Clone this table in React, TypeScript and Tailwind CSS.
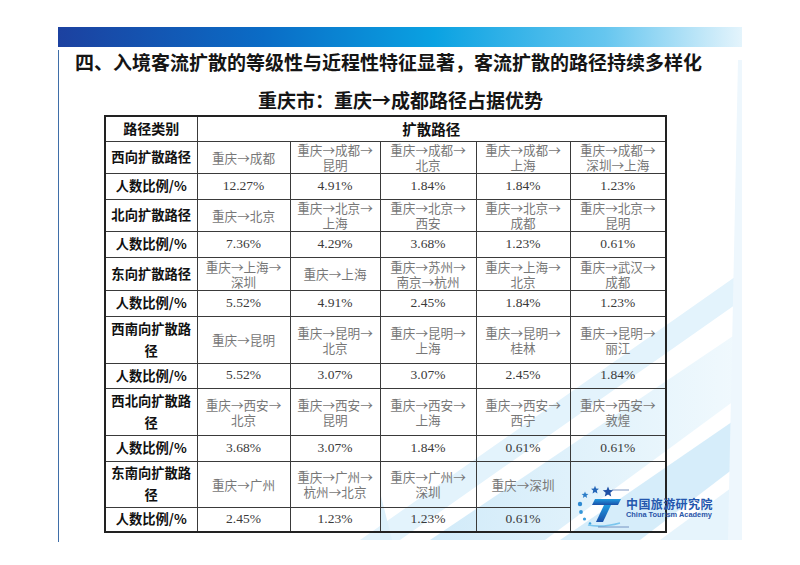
import React from "react";

type Group = {
  label: string;
  routes: string[];
  pcts: string[];
  rowH: string;
  pctH: string;
  tall?: boolean;
};

const groups: Group[] = [
  {
    label: "西向扩散路径",
    routes: ["重庆→成都", "重庆→成都→\n昆明", "重庆→成都→\n北京", "重庆→成都→\n上海", "重庆→成都→\n深圳→上海"],
    pcts: ["12.27%", "4.91%", "1.84%", "1.84%", "1.23%"],
    rowH: "h-[32px]",
    pctH: "h-[26px]",
  },
  {
    label: "北向扩散路径",
    routes: ["重庆→北京", "重庆→北京→\n上海", "重庆→北京→\n西安", "重庆→北京→\n成都", "重庆→北京→\n昆明"],
    pcts: ["7.36%", "4.29%", "3.68%", "1.23%", "0.61%"],
    rowH: "h-[32px]",
    pctH: "h-[26px]",
  },
  {
    label: "东向扩散路径",
    routes: ["重庆→上海→\n深圳", "重庆→上海", "重庆→苏州→\n南京→杭州", "重庆→上海→\n北京", "重庆→武汉→\n成都"],
    pcts: ["5.52%", "4.91%", "2.45%", "1.84%", "1.23%"],
    rowH: "h-[33px]",
    pctH: "h-[26px]",
  },
  {
    label: "西南向扩散路\n径",
    routes: ["重庆→昆明", "重庆→昆明→\n北京", "重庆→昆明→\n上海", "重庆→昆明→\n桂林", "重庆→昆明→\n丽江"],
    pcts: ["5.52%", "3.07%", "3.07%", "2.45%", "1.84%"],
    rowH: "h-[47px]",
    pctH: "h-[25px]",
    tall: true,
  },
  {
    label: "西北向扩散路\n径",
    routes: ["重庆→西安→\n北京", "重庆→西安→\n昆明", "重庆→西安→\n上海", "重庆→西安→\n西宁", "重庆→西安→\n敦煌"],
    pcts: ["3.68%", "3.07%", "1.84%", "0.61%", "0.61%"],
    rowH: "h-[47px]",
    pctH: "h-[26px]",
    tall: true,
  },
  {
    label: "东南向扩散路\n径",
    routes: ["重庆→广州", "重庆→广州→\n杭州→北京", "重庆→广州→\n深圳", "重庆→深圳"],
    pcts: ["2.45%", "1.23%", "1.23%", "0.61%"],
    rowH: "h-[46px]",
    pctH: "h-[25px]",
    tall: true,
  },
];

const cjk = "font-['Noto_Sans_CJK_SC',sans-serif]";
const cell = "border border-[#3a3a3a] p-0 text-center align-middle";

// the arrows in the source are full-width, Noto's are narrow
const Route = ({ text }: { text: string }) => (
  <>
    {text.split("\n").map((line, i) => (
      <div key={i}>
        {line.split("→").map((part, j) => (
          <React.Fragment key={j}>
            {j > 0 && <span className="inline-block w-[1em] text-center">→</span>}
            {part}
          </React.Fragment>
        ))}
      </div>
    ))}
  </>
);

const Lines = ({ text }: { text: string }) => (
  <>
    {text.split("\n").map((t, i) => (
      <div key={i}>{t}</div>
    ))}
  </>
);

const star = (cx: number, cy: number, r: number) => {
  const pts: string[] = [];
  for (let i = 0; i < 10; i++) {
    const rad = i % 2 === 0 ? r : r * 0.45;
    const a = -Math.PI / 2 + (i * Math.PI) / 5;
    pts.push(`${(cx + rad * Math.cos(a)).toFixed(2)},${(cy + rad * Math.sin(a)).toFixed(2)}`);
  }
  return pts.join(" ");
};

const Logo = () => (
  <div className="absolute left-[576px] top-[484px] flex items-start">
    <svg width="50" height="46" viewBox="0 0 50 46" className="overflow-visible">
      <defs>
        <linearGradient id="tgrad" x1="0" y1="0" x2="0" y2="1">
          <stop offset="0%" stopColor="#1f9ae0" />
          <stop offset="100%" stopColor="#1a4fa8" />
        </linearGradient>
      </defs>
      <polygon points={star(32, 8, 5.5)} fill="#1d4fa5" />
      <polygon points={star(19, 6, 4.2)} fill="#2466b8" />
      <polygon points={star(9, 11, 3.6)} fill="#2b7cc8" />
      <circle cx="4" cy="20" r="2.2" fill="#2f8ad2" />
      <circle cx="5" cy="28" r="1.9" fill="#3596d8" />
      <circle cx="8.5" cy="35" r="1.6" fill="#3a9edc" />
      <circle cx="14" cy="39.5" r="1.3" fill="#42a6e0" />
      <line x1="36" y1="6" x2="53" y2="6" stroke="#5d7fb4" strokeWidth="0.8" />
      <polygon points="19,15 45,15 42,21 16,21" fill="url(#tgrad)" />
      <polygon points="28,21 35,21 27,38 20,38" fill="url(#tgrad)" />
      <path d="M12 41 Q 26 44 44 39" stroke="#7cc6ee" strokeWidth="1.6" fill="none" />
      <line x1="22" y1="43" x2="53" y2="43" stroke="#5d7fb4" strokeWidth="0.8" />
    </svg>
    <div className="mt-[13px] flex flex-col">
      <div className={`${cjk} text-[12px] leading-[13px] font-bold text-[#2457ae] tracking-[0.4px]`}>
        中国旅游研究院
      </div>
      <div className="mt-[1px] font-['Liberation_Sans',sans-serif] text-[7.4px] leading-[8px] font-bold text-[#2a55a8]">
        China Tourism Academy
      </div>
    </div>
  </div>
);

const Backdrop = () => (
  <svg className="absolute inset-0" width="800" height="565" viewBox="0 0 800 565">
    <defs>
      <clipPath id="slide">
        <rect x="58" y="47" width="684" height="493" />
      </clipPath>
      <linearGradient id="fade" x1="0" y1="0" x2="1" y2="0">
        <stop offset="0%" stopColor="#c9e7f8" />
        <stop offset="100%" stopColor="#eef8fd" />
      </linearGradient>
    </defs>
    <g clipPath="url(#slide)">
      <polygon points="360,540 400,540 742,300 742,272" fill="#e3f3fc" />
      <polygon points="430,540 545,540 742,395 742,330" fill="url(#fade)" opacity="0.85" />
      <polygon points="560,540 640,540 742,462 742,415" fill="#d2ebf9" opacity="0.9" />
      <polygon points="660,540 742,540 742,480" fill="#e6f4fc" />
      <polygon points="728,540 742,540 742,60 738,60" fill="#eef7fd" />
      <polygon points="380,492 392,540 380,540" fill="#dcf0fb" />
    </g>
  </svg>
);

export default function App() {
  return (
    <div className="relative w-[800px] h-[565px] bg-white overflow-hidden">
      <Backdrop />
      <div className="relative pt-[27px] pl-[58px]">
        <div className="w-[684px] h-[20px] bg-[linear-gradient(to_right,#1c41a0_0%,#0a6cc6_30%,#0aa2e2_55%,#66c6ef_80%,#e4f4fc_100%)]" />
        <div className="w-[684px] h-[492px] border-l-[1.5px] border-[#3f6ea8]">
          <div className={`${cjk} mt-[3px] pl-[16px] text-[19px] leading-[24px] font-bold text-[#151515]`}>
            四、入境客流扩散的等级性与近程性特征显著，客流扩散的路径持续多样化
          </div>
          <div className={`${cjk} mt-[14px] text-center text-[19px] leading-[24px] font-bold text-[#151515]`}>
            重庆市：重庆→成都路径占据优势
          </div>
          <table className="mt-[3px] ml-[45px] w-[561px] table-fixed border-collapse border-2 border-[#222]">
            <colgroup>
              <col className="w-[92px]" />
              <col className="w-[93px]" />
              <col className="w-[90px]" />
              <col className="w-[96px]" />
              <col className="w-[94px]" />
              <col className="w-[96px]" />
            </colgroup>
            <tbody>
              <tr className="h-[25px]">
                <td className={`${cell} ${cjk} text-[14px] font-bold text-[#111]`}>路径类别</td>
                <td colSpan={5} className={`${cell} ${cjk} text-[14.5px] font-bold text-[#111]`}>
                  扩散路径
                </td>
              </tr>
              {groups.map((g) => (
                <React.Fragment key={g.label}>
                  <tr className={g.rowH}>
                    <td
                      className={`${cell} ${cjk} text-[13.3px] font-bold text-[#111] ${
                        g.tall ? "leading-[22px]" : "leading-[16px]"
                      }`}
                    >
                      <Lines text={g.label} />
                    </td>
                    {g.routes.map((r, i) => (
                      <td key={i} className={`${cell} ${cjk} text-[12.6px] leading-[15px] text-[#777]`}>
                        <Route text={r} />
                      </td>
                    ))}
                    {g.routes.length < 5 && <td rowSpan={2} className={cell} />}
                  </tr>
                  <tr className={g.pctH}>
                    <td className={`${cell} ${cjk} text-[13.3px] font-bold text-[#111]`}>人数比例/%</td>
                    {g.pcts.map((p, i) => (
                      <td
                        key={i}
                        className={`${cell} font-['Liberation_Serif',serif] text-[13.5px] text-[#3a3a3a]`}
                      >
                        {p}
                      </td>
                    ))}
                  </tr>
                </React.Fragment>
              ))}
            </tbody>
          </table>
        </div>
      </div>
      <Logo />
    </div>
  );
}
